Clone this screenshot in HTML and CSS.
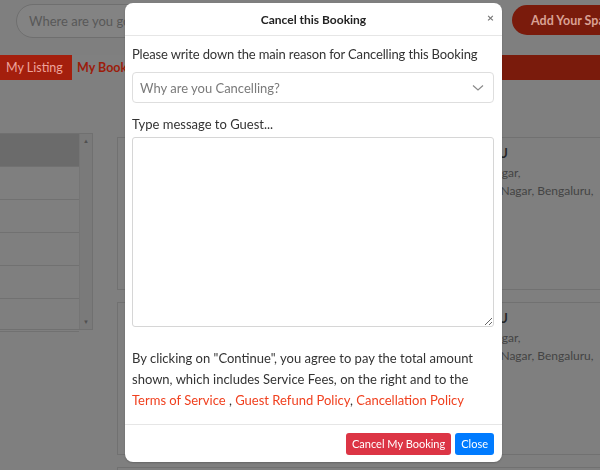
FILE: index.html
```html
<!DOCTYPE html>
<html>
<head>
<meta charset="utf-8">
<link rel="stylesheet" href="styles.css">
</head>
<body>
<div class="page">
  <header class="topbar">
    <div class="search">Where are you going?</div>
    <button class="add-btn">Add Your Space</button>
  </header>
  <nav class="nav">
    <a class="tab tab-listing">My Listing</a>
    <a class="tab tab-bookings">My Bookings</a>
  </nav>
  <main class="content">
    <aside class="list">
      <div class="list-rows">
        <div class="row row-active"></div>
        <div class="row"></div>
        <div class="row"></div>
        <div class="row"></div>
        <div class="row"></div>
        <div class="row"></div>
      </div>
      <div class="scrollbar"><span class="arrow">&#9650;</span><span class="arrow">&#9660;</span></div>
    </aside>
    <section class="cards">
      <article class="card">
        <div class="card-img"></div>
        <div class="card-text">
          <div class="card-title">SAI GURU</div>
          <div class="card-line">Sanjay Nagar,</div>
          <div class="card-line">Sahakara Nagar, Bengaluru,</div>
        </div>
      </article>
      <article class="card">
        <div class="card-img"></div>
        <div class="card-text">
          <div class="card-title">SAI GURU</div>
          <div class="card-line">Sanjay Nagar,</div>
          <div class="card-line">Sahakara Nagar, Bengaluru,</div>
        </div>
      </article>
      <article class="card"></article>
    </section>
  </main>
</div>

<div class="modal">
  <div class="modal-header">
    <h2 class="modal-title">Cancel this Booking</h2>
    <span class="modal-close">&times;</span>
  </div>
  <div class="modal-body">
    <p class="label">Please write down the main reason for Cancelling this Booking</p>
    <div class="select">
      <span class="select-placeholder">Why are you Cancelling?</span>
      <svg class="chevron" width="12" height="8" viewBox="0 0 12 8"><polyline points="1,1.5 6,6 11,1.5" fill="none" stroke="#8a8a8a" stroke-width="1.2"/></svg>
    </div>
    <p class="label label-msg">Type message to Guest...</p>
    <textarea class="message"></textarea>
    <p class="terms">By clicking on "Continue", you agree to pay the total amount shown, which includes Service Fees, on the right and to the <a class="link">Terms of Service</a> , <a class="link">Guest Refund Policy</a>, <a class="link">Cancellation Policy</a></p>
  </div>
  <div class="modal-footer">
    <button class="btn btn-danger">Cancel My Booking</button>
    <button class="btn btn-primary">Close</button>
  </div>
</div>
</body>
</html>
```
FILE: styles.css
```css
* { box-sizing: border-box; }
html, body { margin: 0; height: 100%; }
body {
  background: #7f7f7f;
  font-family: "Lato", "Noto Sans", sans-serif;
  overflow: hidden;
  width: 600px;
  height: 470px;
}
.page { width: 600px; overflow: hidden; height: 470px; }
.topbar {
  display: flex;
  align-items: flex-start;
  padding: 4px 0 0 16px;
  height: 38px;
  width: 720px;
}
.search {
  width: 470px;
  height: 34px;
  border: 1px solid #6f6f6f;
  border-radius: 17px;
  background: #838383;
  color: #585858;
  font-size: 13px;
  line-height: 32px;
  padding-left: 12px;
  flex-shrink: 0;
}
.add-btn {
  margin-left: 26px;
  margin-top: 1px;
  width: 120px;
  height: 30px;
  border: none;
  border-radius: 15px;
  background: #7a1b0c;
  color: #d9a194;
  font-family: inherit;
  font-weight: 700;
  font-size: 12.5px;
  text-align: left;
  padding-left: 19px;
  flex-shrink: 0;
}
.nav {
  margin-top: 17px;
  height: 25px;
  background: #7a1b0c;
  display: flex;
}
.tab {
  font-size: 12.5px;
  line-height: 25px;
  padding: 0 6px;
}
.tab-listing { width: 72px; background: #a41f0d; color: #eea49c; }
.tab-bookings { background: #808080; color: #9c1d0b; font-weight: 700; width: 100px; padding-left: 5px; }
.content {
  display: flex;
  margin-top: 53px;
}
.list {
  width: 93px;
  height: 197px;
  display: flex;
  border: 1px solid #707070;
  border-left: none;
  flex-shrink: 0;
}
.list-rows { flex: 1; }
.row { height: 33px; border-bottom: 1px solid #717171; }
.row-active { background: #6b6b6b; }
.scrollbar {
  width: 13px;
  background: #7a7a7a;
  border-left: 1px solid #757575;
  display: flex;
  flex-direction: column;
  justify-content: space-between;
  align-items: center;
  padding: 3px 0;
}
.arrow { font-size: 6px; color: #505050; line-height: 8px; }
.cards {
  margin-left: 24px;
  margin-top: 4px;
  display: flex;
  flex-direction: column;
  gap: 12px;
  width: 520px;
  flex-shrink: 0;
}
.card {
  height: 153px;
  border: 1px solid #717171;
  display: flex;
}
.card-img { width: 332px; flex-shrink: 0; }
.card-text { padding-top: 7px; white-space: nowrap; }
.card-title { font-weight: 700; font-size: 12.5px; color: #262626; line-height: 18px; margin-bottom: 1px; }
.card-line { font-size: 12px; color: #444; line-height: 18px; }

.modal {
  position: fixed;
  left: 125px;
  top: 3px;
  width: 377px;
  height: 459px;
  background: #fff;
  border-radius: 8px;
  box-shadow: 0 1px 2px rgba(0,0,0,0.2);
  display: flex;
  flex-direction: column;
}
.modal-header {
  height: 33px;
  flex-shrink: 0;
  border-bottom: 1px solid #e6e6e6;
  display: flex;
  align-items: center;
  justify-content: center;
  position: relative;
}
.modal-title { margin: 0; font-size: 12px; font-weight: 700; color: #222; }
.modal-close {
  position: absolute;
  right: 8px;
  top: 7px;
  font-size: 12px;
  font-weight: 700;
  color: #777;
}
.modal-body { padding: 8px 8px 0 7px; flex: 1; }
.label { margin: 0; font-size: 13px; line-height: 20px; color: #333; letter-spacing: -0.15px; white-space: nowrap; }
.select {
  margin-top: 8px;
  height: 31px;
  border: 1px solid #dedede;
  border-radius: 4px;
  display: flex;
  align-items: center;
  justify-content: space-between;
  padding: 0 9px 0 7px;
}
.select-placeholder { font-size: 13px; color: #7a7a7a; }
.label-msg { margin-top: 11px; letter-spacing: 0; }
.message {
  display: block;
  margin-top: 3px;
  width: 100%;
  height: 190px;
  border: 1px solid #d6d6d6;
  border-radius: 3px;
  resize: vertical;
}
.terms {
  margin: 21px 0 0;
  font-size: 13px;
  line-height: 21px;
  color: #333;
}
.link { color: #f0401f; }
.modal-footer {
  height: 38px;
  flex-shrink: 0;
  border-top: 1px solid #e6e6e6;
  display: flex;
  justify-content: flex-end;
  align-items: center;
  gap: 4px;
  padding: 0 8px;
}
.btn {
  height: 22px;
  border: none;
  border-radius: 3px;
  color: #fff;
  font-family: inherit;
  font-size: 11px;
  padding: 0 6px;
}
.btn-danger { background: #dc3545; }
.btn-primary { background: #007bff; }
```
